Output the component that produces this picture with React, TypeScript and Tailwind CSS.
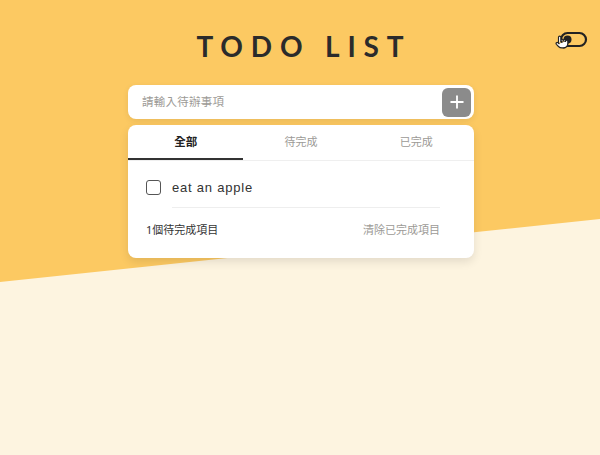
import { Plus, Pointer } from 'lucide-react';

const tabs = ['全部', '待完成', '已完成'];

function ThemeToggle() {
  return (
    <div className="relative h-[20px] w-[30px]">
      <svg width="30" height="20" viewBox="0 0 30 20" fill="none">
        <rect x="3" y="3" width="25" height="13" rx="6.5" stroke="#222" strokeWidth="2.2" />
        <circle cx="9.5" cy="9.5" r="4" fill="#222" />
      </svg>
      {/* mouse cursor hovering the toggle */}
      <Pointer
        size={14}
        className="absolute left-[-3px] top-[5px]"
        fill="white"
        color="#222"
        strokeWidth={2}
      />
    </div>
  );
}

export default function App() {
  return (
    <div className="relative min-h-screen bg-[#fdf4e0] font-['Noto_Sans','Noto_Sans_CJK_TC',sans-serif] text-[#333]">
      {/* yellow top section with slanted edge */}
      <div className="absolute inset-0 bg-[#fcc962] [clip-path:polygon(0_0,100%_0,100%_219px,0_282px)]" />

      <div className="relative">
        <header className="grid grid-cols-[1fr_auto_1fr] items-start pt-[28px]">
          <div />
          <h1 className="font-['Lato',sans-serif] text-[28px] leading-[36px] font-bold tracking-[0.28em] pl-[0.28em] text-[#2b2b2b]">
            TODO LIST
          </h1>
          <div className="flex justify-end pr-[12px] pt-[2px]">
            <ThemeToggle />
          </div>
        </header>

        <main className="mt-[21px] flex justify-center pl-[2px]">
          <div className="w-[346px]">
            <div className="flex h-[34px] items-center rounded-[8px] bg-white pl-[14px] pr-[3px] shadow-[0_2px_6px_rgba(0,0,0,0.08)]">
              <input
                placeholder="請輸入待辦事項"
                className="flex-1 bg-transparent text-[11.5px] tracking-[0.02em] outline-none placeholder:text-[#9c9a96]"
              />
              <button className="flex h-[29px] w-[29px] items-center justify-center rounded-[6px] bg-[#8b8b8b]">
                <Plus size={20} color="white" strokeWidth={2.2} />
              </button>
            </div>

            <div className="mt-[6px] overflow-hidden rounded-[8px] bg-white shadow-[0_4px_10px_rgba(0,0,0,0.1)]">
              <div className="grid grid-cols-3 border-b border-[#efefef]">
                {tabs.map((t, i) => (
                  <div
                    key={t}
                    className={
                      i === 0
                        ? 'flex h-[35px] items-center justify-center border-b-2 border-[#333] pt-[1px] text-[11.5px] font-bold text-[#222]'
                        : 'flex h-[35px] items-center justify-center border-b-2 border-transparent pt-[1px] text-[11px] text-[#9c9a96]'
                    }
                  >
                    {t}
                  </div>
                ))}
              </div>

              <div className="pl-[18px] pr-[34px] pt-[19px]">
                <div className="flex h-[15px] items-center gap-[11px] mb-[12px]">
                  <span className="h-[15px] w-[15px] rounded-[3px] border-[1.5px] border-[#555]" />
                  <span className="font-['Liberation_Sans',sans-serif] text-[13px] leading-[15px] tracking-[0.06em]">eat an apple</span>
                </div>
                <div className="ml-[26px] border-b border-[#eeeeee]" />
                <div className="flex items-center justify-between pb-[20px] pt-[14px] text-[11px] leading-[16px]">
                  <span className="text-[#333]">1個待完成項目</span>
                  <span className="text-[#9c9a96]">清除已完成項目</span>
                </div>
              </div>
            </div>
          </div>
        </main>
      </div>
    </div>
  );
}
